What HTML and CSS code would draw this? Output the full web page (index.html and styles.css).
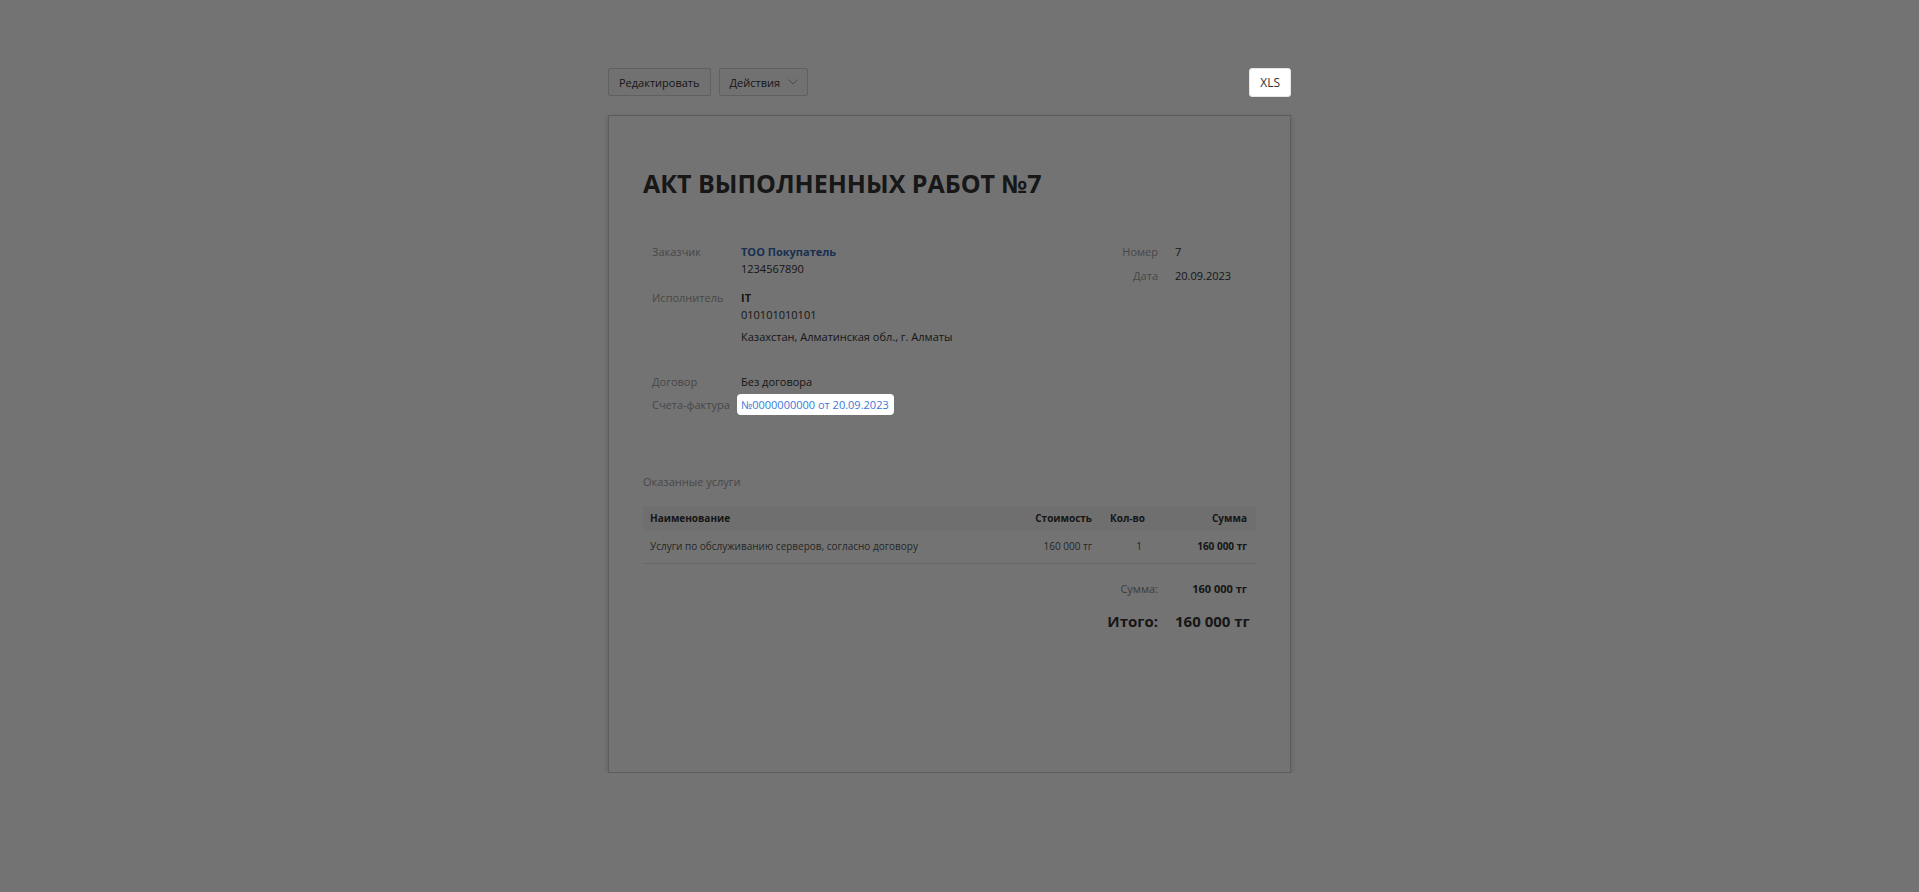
FILE: index.html
```html
<!DOCTYPE html>
<html lang="ru">
<head>
<meta charset="utf-8">
<title>Акт выполненных работ №7</title>
<link rel="stylesheet" href="styles.css">
</head>
<body>
<div class="page">
  <div class="toolbar">
    <div class="toolbar-left">
      <button class="btn">Редактировать</button>
      <button class="btn btn-dropdown">Действия
        <svg class="chevron" width="10" height="6" viewBox="0 0 10 6"><path d="M0.5 0.5 L5 5 L9.5 0.5" fill="none" stroke="currentColor" stroke-width="1"/></svg>
      </button>
    </div>
    <button class="btn btn-xls spotlight">XLS</button>
  </div>

  <div class="doc">
    <h1 class="doc-title">АКТ ВЫПОЛНЕННЫХ РАБОТ №7</h1>

    <div class="details">
      <div class="parties">
        <div class="group">
          <div class="row">
            <div class="label">Заказчик</div>
            <div class="value">
              <div class="party-name link-party">ТОО Покупатель</div>
              <div>1234567890</div>
            </div>
          </div>
          <div class="row">
            <div class="label">Исполнитель</div>
            <div class="value">
              <div class="party-name">IT</div>
              <div>010101010101</div>
              <div class="address">Казахстан, Алматинская обл., г. Алматы</div>
            </div>
          </div>
        </div>
        <div class="group group-docs">
          <div class="row">
            <div class="label">Договор</div>
            <div class="value">Без договора</div>
          </div>
          <div class="row">
            <div class="label">Счета-фактура</div>
            <div class="value"><a class="invoice-link spotlight" href="#">№0000000000 от 20.09.2023</a></div>
          </div>
        </div>
      </div>
      <div class="meta">
        <div class="meta-label">Номер</div><div class="meta-value">7</div>
        <div class="meta-label">Дата</div><div class="meta-value">20.09.2023</div>
      </div>
    </div>

    <div class="section-title">Оказанные услуги</div>
    <table class="items">
      <colgroup>
        <col>
        <col class="col-price">
        <col class="col-qty">
        <col class="col-sum">
      </colgroup>
      <thead>
        <tr>
          <th class="cell-name">Наименование</th>
          <th class="num">Стоимость</th>
          <th class="num">Кол-во</th>
          <th class="num">Сумма</th>
        </tr>
      </thead>
      <tbody>
        <tr>
          <td class="cell-name">Услуги по обслуживанию серверов, согласно договору</td>
          <td class="num">160 000 тг</td>
          <td class="num">1</td>
          <td class="num strong">160 000 тг</td>
        </tr>
      </tbody>
    </table>

    <div class="totals">
      <div class="total-label">Сумма:</div><div class="total-value">160 000 тг</div>
      <div class="total-label grand">Итого:</div><div class="total-value grand">160 000 тг</div>
    </div>
  </div>
</div>
<div class="tour-overlay"></div>
</body>
</html>
```

FILE: styles.css
```css
* { box-sizing: border-box; }

html, body {
  margin: 0;
  background: #fff;
}

body {
  padding-right: 20px;
  font-family: "Open Sans", "Noto Sans", "DejaVu Sans", sans-serif;
  font-size: 11px;
  line-height: 17px;
  color: #333;
}

.page {
  width: 683px;
  margin: 0 auto;
  padding-top: 68px;
}

/* toolbar */
.toolbar {
  display: flex;
  justify-content: space-between;
  align-items: flex-start;
}

.toolbar-left {
  display: flex;
  gap: 8px;
}

.btn {
  display: inline-flex;
  align-items: center;
  height: 28px;
  padding: 0 10px;
  border: 1px solid #d4d4d4;
  border-radius: 2px;
  background: #fafafa;
  font-family: inherit;
  font-size: 11px;
  color: #333;
}

.btn-dropdown { padding-right: 9px; }

.chevron {
  margin-left: 8px;
  color: #aaa;
}

.btn-xls {
  height: 29px;
  padding: 0 10px;
  font-size: 12px;
  background: #fff;
  border-color: #e6e6e6;
  border-radius: 3px;
}

/* document card */
.doc {
  margin-top: 18px;
  height: 658px;
  padding: 51px 34px 0;
  border: 1px solid #cfcfcf;
  background: #fff;
  box-shadow: 0 2px 6px rgba(0, 0, 0, 0.18);
}

.doc-title {
  margin: 0;
  font-size: 25px;
  line-height: 32px;
  font-weight: 700;
  color: #333;
}

.details {
  display: flex;
  justify-content: space-between;
  margin-top: 44px;
  padding: 0 9px;
}

.group {
  display: flex;
  flex-direction: column;
  gap: 12px;
}

.group-docs {
  margin-top: 28px;
  gap: 6px;
}

.row {
  display: flex;
}

.label {
  width: 89px;
  flex: none;
  color: #a0a0a0;
}

.value { color: #333; }

.party-name { font-weight: 700; }

.link-party { color: #3569b4; }

.address { margin-top: 5px; }

.invoice-link {
  display: inline-block;
  margin: -2px 0 -2px -4px;
  padding: 2px 5px 2px 4px;
  border-radius: 4px;
  background: #fff;
  color: #3a78d8;
  text-decoration: none;
}

.meta {
  display: grid;
  grid-template-columns: auto 72px;
  column-gap: 17px;
  row-gap: 7px;
  align-content: start;
}

.meta-label {
  text-align: right;
  color: #a0a0a0;
}

/* services table */
.section-title {
  margin-top: 60px;
  color: #a0a0a0;
}

.items {
  width: 100%;
  margin-top: 16px;
  border-collapse: collapse;
  table-layout: fixed;
  font-size: 10px;
}

.col-price { width: 110px; }
.col-qty { width: 50px; }
.col-sum { width: 105px; }

.items th,
.items td {
  padding: 0 9px;
  text-align: left;
  white-space: nowrap;
}

.items th {
  height: 25px;
  background: #f6f6f6;
  font-weight: 700;
  color: #333;
}

.items td {
  height: 32px;
  border-bottom: 1px solid #e6e6e6;
  color: #555;
}

.items .cell-name { padding-left: 7px; }

.items .num { text-align: right; }

.items td.strong {
  font-weight: 700;
  color: #333;
}

.totals {
  display: grid;
  grid-template-columns: auto 72px;
  column-gap: 17px;
  row-gap: 14px;
  justify-content: end;
  align-items: center;
  margin-top: 16px;
  padding-right: 9px;
}

.total-label {
  text-align: right;
  color: #888;
}

.total-value {
  text-align: right;
  font-weight: 700;
  color: #333;
  white-space: nowrap;
}

.total-label.grand,
.total-value.grand {
  font-size: 15px;
  line-height: 20px;
  font-weight: 700;
  color: #333;
}

/* guided tour dimming layer; highlighted items sit above it */
.tour-overlay {
  position: fixed;
  inset: 0;
  background: rgba(0, 0, 0, 0.55);
  z-index: 100;
}

.spotlight {
  position: relative;
  z-index: 101;
}
```
